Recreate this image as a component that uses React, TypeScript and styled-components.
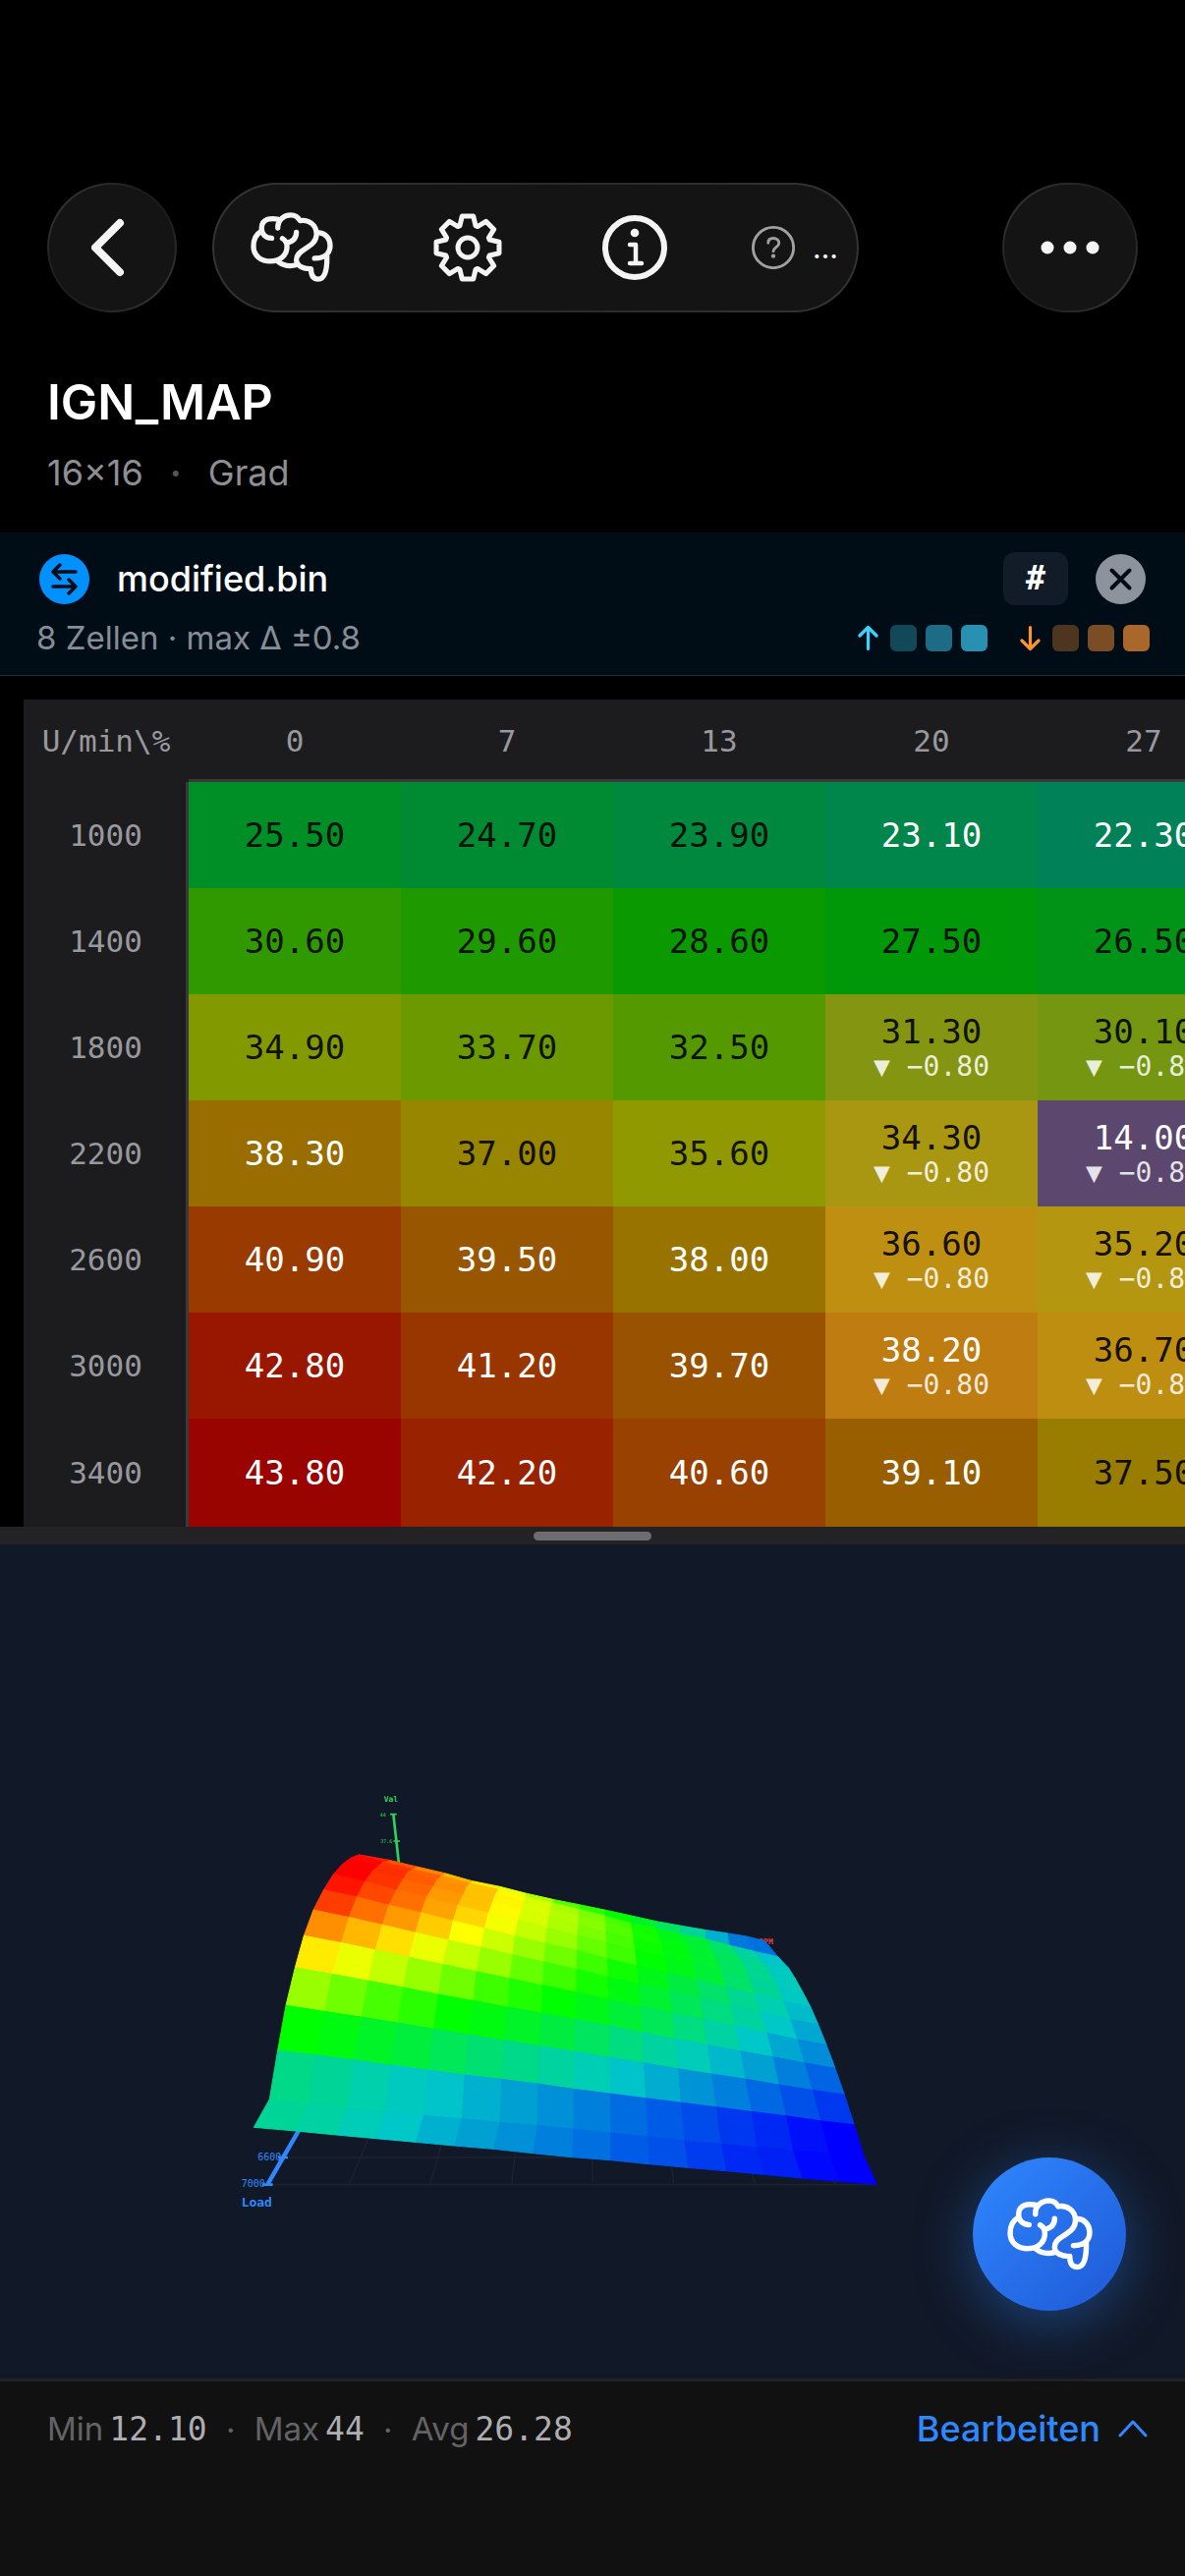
import { FC, ReactNode } from 'react'
import styled, { createGlobalStyle } from 'styled-components'

const sans = `Inter, 'Liberation Sans', sans-serif`
const mono = `'DejaVu Sans Mono', 'Liberation Mono', monospace`

const MIN = 12.1
const MAX = 44

const GlobalStyle = createGlobalStyle`
	* {
		box-sizing: border-box;
	}

	body {
		margin: 0;
		background: #000;
		color: #fff;
		font-family: ${sans};
	}

	button {
		margin: 0;
		padding: 0;
		border: 0;
		background: none;
		color: inherit;
		font: inherit;
		cursor: pointer;
	}

	svg {
		display: block;
	}
`

type RGB = [number, number, number]

const stops: RGB[] = [
	[0, 0, 255],
	[0, 200, 200],
	[0, 255, 0],
	[255, 255, 0],
	[255, 0, 0],
]

const heat = (t: number): RGB => {
	const pos = Math.min(Math.max(t, 0), 1) * 4
	const i = Math.min(Math.floor(pos), 3)
	return stops[i].map((c, k) => c + (stops[i + 1][k] - c) * (pos - i)) as RGB
}

const css = (c: RGB) => `rgb(${c.map(Math.round).join(', ')})`

const cellColor = (value: number, changed: boolean) => {
	const base = heat((value - MIN) / (MAX - MIN)).map((c) => c * 0.6) as RGB
	const tint: RGB = [255, 146, 48]
	return css(changed ? (base.map((c, k) => c + (tint[k] - c) * 0.36) as RGB) : base)
}

const Page = styled.div`
	min-height: 100vh;
	display: flex;
	flex-direction: column;
	overflow: hidden;
`

const Toolbar = styled.nav`
	display: flex;
	align-items: center;
	padding: 186px 48px 0;
`

const GlassButton = styled.button<{ $width: number }>`
	width: ${({ $width }) => $width}px;
	height: 132px;
	display: flex;
	align-items: center;
	justify-content: center;
	flex: none;
	border: 2px solid transparent;
	border-radius: 69px;
	color: #f4f4f4;
	background: linear-gradient(#141414, #141414) padding-box,
		linear-gradient(135deg, #3c3c3c, #1c1c1c 40%, #1c1c1c 60%, #3c3c3c) border-box;
`

const Pill = styled.div`
	height: 132px;
	margin: 0 auto 0 36px;
	padding: 0 19px 0 37px;
	display: flex;
	align-items: center;
	gap: 86px;
	border: 2px solid transparent;
	border-radius: 66px;
	color: #f4f4f4;
	background: linear-gradient(#141414, #141414) padding-box,
		linear-gradient(100deg, #333, #2a2a2a 50%, #333) border-box;
`

const ToolButton = styled.button<{ $width: number }>`
	width: ${({ $width }) => $width}px;
	height: 72px;
	display: flex;
	align-items: center;
	justify-content: center;
`

const HelpButton = styled.button`
	display: flex;
	align-items: center;
	gap: 18px;
	width: 88px;
	font-size: 30px;
	line-height: 36px;
`

const TitleBlock = styled.header`
	padding: 61px 48px 39px;
`

const Title = styled.h1`
	margin: 0 0 20px;
	font-size: 50px;
	line-height: 60px;
	font-weight: 600;
`

const Subtitle = styled.div`
	display: flex;
	gap: 27px;
	font-size: 36px;
	line-height: 44px;
	color: #8e8e93;
`

const Dot = styled.span`
	color: #545458;
	font-weight: 700;
`

const Banner = styled.section`
	padding: 20px 36px 18px;
	display: flex;
	flex-direction: column;
	gap: 13px;
	background: #000d17;
	border-bottom: 1px solid #2a2f34;
`

const BannerRow = styled.div<{ $height: number }>`
	height: ${({ $height }) => $height}px;
	padding: 0 0 0 4px;
	display: flex;
	align-items: center;
`

const FileName = styled.strong`
	flex: 1;
	margin-left: 28px;
	font-size: 36px;
	line-height: 44px;
	font-weight: 500;
`

const DiffSummary = styled.span`
	flex: 1;
	margin-left: -3px;
	font-size: 33px;
	line-height: 40px;
	color: #868d96;
`

const HashButton = styled.button`
	width: 66px;
	height: 54px;
	margin-right: 28px;
	border-radius: 12px;
	background: #111c28;
	font-family: ${mono};
	font-size: 33px;
	line-height: 54px;
	font-weight: 700;
`

const CloseButton = styled.button`
	margin-right: 4px;
`

const Legend = styled.div`
	display: flex;
	align-items: center;
	gap: 9px;
	margin-left: 33px;
`

const Swatch = styled.span<{ $color: string }>`
	width: 27px;
	height: 27px;
	border-radius: 6px;
	background: ${({ $color }) => $color};
`

const TableScroller = styled.div`
	margin: 24px 0 0 24px;
	overflow: hidden;
`

const MapTable = styled.table`
	width: 1248px;
	table-layout: fixed;
	border-collapse: separate;
	border-spacing: 0;
	background: #1c1c1e;
	font-family: ${mono};
	text-align: center;
`

const HeadCell = styled.th<{ $corner?: boolean }>`
	width: ${({ $corner }) => ($corner ? 168 : 216)}px;
	height: 84px;
	padding: 3px 0 0;
	border-bottom: 3px solid ${({ $corner }) => ($corner ? '#1c1c1e' : '#3a3a3c')};
	font-size: 31px;
	line-height: 36px;
	font-weight: 400;
	color: #98989f;
`

const RowHead = styled.th`
	height: 108px;
	padding: 0 0 0 2px;
	border-right: 3px solid #3a3a3c;
	font-size: 31px;
	line-height: 36px;
	font-weight: 400;
	color: #98989f;

	tr:last-child & {
		height: 110px;
	}
`

const Cell = styled.td<{ $value: number; $changed: boolean }>`
	padding: ${({ $changed }) => ($changed ? '4px 0 0' : '0')};
	background: ${({ $value, $changed }) => cellColor($value, $changed)};
	color: ${({ $value }) => ($value < 23.5 || $value > 37.8 ? '#fff' : 'rgba(0, 0, 0, 0.9)')};
	font-size: 34px;
	line-height: 36px;
`

const Delta = styled.div`
	color: rgba(255, 255, 255, 0.85);
	font-size: 28px;
	line-height: 36px;
`

const Divider = styled.div`
	height: 18px;
	display: flex;
	align-items: center;
	justify-content: center;
	background: #232325;
`

const Handle = styled.span`
	width: 120px;
	height: 9px;
	border-radius: 5px;
	background: #6c6c71;
`

const ChartPanel = styled.section`
	position: relative;
	flex: 1;
	min-height: 600px;
	background: #111827;
`

const Fab = styled.button`
	position: absolute;
	right: 60px;
	bottom: 69px;
	width: 156px;
	height: 156px;
	display: flex;
	align-items: center;
	justify-content: center;
	border-radius: 50%;
	background: linear-gradient(135deg, #2f88ff, #1f58d6);
	box-shadow: 0 12px 60px rgba(45, 136, 255, 0.4);
`

const StatusBar = styled.footer`
	height: 201px;
	padding: 26px 38px 0 48px;
	display: flex;
	align-items: flex-start;
	justify-content: space-between;
	border-top: 3px solid #222224;
	background: #111;
`

const Stats = styled.div`
	display: flex;
	align-items: center;
	font-size: 33px;
	line-height: 44px;
	color: #636366;

	b {
		margin-left: 6px;
		font-family: ${mono};
		font-weight: 400;
		color: #aeaeb2;
	}

	i {
		width: 48px;
		text-align: center;
		font-style: normal;
	}
`

const EditButton = styled.button`
	display: flex;
	align-items: center;
	gap: 18px;
	font-size: 36px;
	line-height: 44px;
	font-weight: 500;
	color: #2f88ff;
`

const BrainIcon: FC<{ size: number }> = ({ size }) => (
	<svg
		width={size}
		viewBox="74 77 254 215"
		fill="none"
		stroke="currentColor"
		strokeWidth="16"
		strokeLinecap="round"
		strokeLinejoin="round"
	>
		<path d="M105 137C91 145 83 160 83 182C83 211 106 228 135 228C165 228 186 210 186 183C186 172 181 163 172 158" />
		<path d="M186 171C205 167 215 156 215 139" />
		<path d="M160 99C138 94 109 96 108 125C107 145 121 157 139 157" />
		<path d="M158 126C156 102 176 86 198 86C211 86 220 92 226 103C252 98 277 116 277 144C277 168 259 179 240 191C224 201 215 209 215 224C215 243 238 252 260 251C260 269 265 283 282 283C302 283 310 256 309 212" />
		<path d="M285 140C305 142 319 158 319 180C319 204 302 219 271 219" />
		<path d="M160 230C176 242 198 244 216 239" />
	</svg>
)

const tooth = [
	[-24, -66],
	[-17, -95],
	[17, -95],
	[24, -66],
]

const gearPoints = Array.from({ length: 8 }, (_, i) => {
	const a = (i * Math.PI) / 4
	return tooth.map(([x, y]) => `${x * Math.cos(a) - y * Math.sin(a)},${x * Math.sin(a) + y * Math.cos(a)}`)
})
	.flat()
	.join(' ')

const GearIcon: FC = () => (
	<svg width="70" viewBox="-104 -104 208 208" fill="none" stroke="currentColor" strokeWidth="15" strokeLinejoin="round">
		<polygon points={gearPoints} />
		<circle r="29.500" />
	</svg>
)

const InfoIcon: FC = () => (
	<svg width="66" viewBox="0 0 66 66" fill="none" stroke="currentColor" strokeWidth="6" strokeLinecap="round">
		<circle cx="33" cy="33" r="30" />
		<circle cx="33" cy="18" r="4.300" fill="currentColor" stroke="none" />
		<path d="M28 30h6v18M28 49h12" strokeWidth="4.500" strokeLinejoin="round" />
	</svg>
)

const HelpIcon: FC = () => (
	<svg width="46" viewBox="0 0 46 46" fill="none" stroke="#a0a0a0" strokeWidth="3" strokeLinecap="round">
		<circle cx="23" cy="23" r="21.500" />
		<path d="M17.500 18C17.500 14.500 20 13 23 13C26.500 13 29 15 29 18.200C29 22.500 23 22.800 23 27" />
		<circle cx="23" cy="32" r="2.200" fill="#a0a0a0" stroke="none" />
	</svg>
)

const ArrowIcon: FC<{ color: string; down?: boolean }> = ({ color, down }) => (
	<svg width="24" height="27" viewBox="0 0 24 27" fill="none" stroke={color} strokeWidth="3.200" strokeLinecap="round" strokeLinejoin="round">
		<path d={down ? 'M10.500 2.500V24.500M2 16L10.500 24.500L19 16' : 'M10.500 24.500V2.500M2 11L10.500 2.500L19 11'} />
	</svg>
)

const columns = ['0', '7', '13', '20', '27']

type MapRow = { rpm: string; values: string[]; changed?: number[] }

const rows: MapRow[] = [
	{ rpm: '1000', values: ['25.50', '24.70', '23.90', '23.10', '22.30'] },
	{ rpm: '1400', values: ['30.60', '29.60', '28.60', '27.50', '26.50'] },
	{ rpm: '1800', values: ['34.90', '33.70', '32.50', '31.30', '30.10'], changed: [3, 4] },
	{ rpm: '2200', values: ['38.30', '37.00', '35.60', '34.30', '14.00'], changed: [3, 4] },
	{ rpm: '2600', values: ['40.90', '39.50', '38.00', '36.60', '35.20'], changed: [3, 4] },
	{ rpm: '3000', values: ['42.80', '41.20', '39.70', '38.20', '36.70'], changed: [3, 4] },
	{ rpm: '3400', values: ['43.80', '42.20', '40.60', '39.10', '37.50'] },
]

// mesh lines of the surface, front to back, 17 projected points each
const mesh = [
	'115,1096 243,1107 365,1119 487,1130 607,1141 726,1152 846,1162 966,1175 1086,1187 1203,1196 1321,1208 1439,1219 1556,1229 1672,1240 1788,1251 1903,1261 2017,1270',
	'163,1010 280,1024 398,1037 515,1048 632,1060 748,1070 864,1081 978,1091 1089,1101 1203,1113 1317,1125 1428,1137 1540,1147 1650,1158 1760,1167 1870,1176 1977,1183',
	'188,861 302,875 417,890 532,906 646,921 757,936 870,949 981,963 1090,979 1202,993 1310,1007 1417,1020 1525,1034 1633,1048 1739,1061 1844,1076 1948,1088',
	'213,724 329,742 442,759 553,777 662,795 769,813 877,830 985,847 1092,864 1200,882 1304,899 1409,917 1511,933 1614,948 1717,966 1819,982 1918,996',
	'241,608 352,628 462,648 569,668 676,690 782,709 888,729 991,747 1095,766 1199,785 1301,807 1400,826 1499,844 1599,863 1699,881 1795,899 1890,916',
	'268,511 379,532 483,554 587,576 690,598 793,620 894,641 995,662 1097,683 1196,705 1294,725 1391,747 1487,766 1584,786 1680,807 1773,828 1863,844',
	'297,432 403,454 505,477 606,501 707,524 807,546 904,569 999,591 1098,613 1194,636 1288,659 1383,679 1476,700 1570,723 1660,744 1752,766 1838,782',
	'328,371 427,392 525,417 623,440 721,465 817,488 910,512 1003,534 1100,555 1192,581 1283,602 1375,623 1465,646 1555,667 1643,689 1730,711 1815,729',
	'358,323 452,345 548,371 640,393 735,418 829,441 920,463 1008,487 1101,510 1191,533 1277,554 1367,576 1454,597 1541,620 1626,640 1710,662 1790,682',
	'385,293 475,313 567,339 660,361 752,386 841,409 930,431 1014,452 1103,477 1188,500 1272,520 1359,540 1445,562 1525,582 1610,604 1690,625 1768,642',
	'410,274 493,297 583,315 672,340 762,362 850,385 935,407 1018,427 1105,450 1187,470 1268,492 1350,513 1432,532 1510,552 1590,572 1668,592 1748,610',
	'435,264 507,285 597,308 686,328 772,350 860,370 942,392 1026,411 1106,430 1185,450 1264,472 1340,488 1413,505 1493,520 1566,540 1640,558 1715,575',
	'450,266 528,280 612,300 698,320 782,344 866,361 944,381 1028,400 1108,416 1186,432 1268,450 1344,467 1416,480 1492,493 1560,503 1620,513 1675,527',
].map((line) => line.split(' ').map((p) => p.split(',').map(Number)))

// percent of the value range for every facet, same order as the mesh
const facets = [
	[31, 29.5, 27, 25, 22, 20, 18, 16, 14, 11.5, 10, 7.5, 5, 4, 1, 0],
	[33, 31, 28.5, 26, 24.5, 22, 20, 18, 16, 13.5, 11.5, 9.5, 7, 5, 2, 0],
	[50, 48, 45, 42.5, 39, 36, 33, 30, 27.5, 24.5, 21.5, 18.5, 16, 13, 10, 7],
	[65, 61, 57, 54, 50, 48, 45, 42, 38, 34, 30, 27, 23, 20, 16, 12.5],
	[77, 73, 69, 65, 61, 56, 53, 50, 47, 43, 39, 34, 29.5, 25, 21, 17.5],
	[86, 82, 78, 73, 69, 65, 60, 56, 52, 48, 44, 39, 34, 30, 25, 21],
	[94, 89, 85, 80, 75, 70, 65, 61, 56, 51.5, 47, 42, 37, 32, 28, 23.5],
	[98, 93, 89, 84, 79, 74, 69, 65, 60, 56, 50, 47, 43, 37, 31, 25.5],
	[100, 95, 90, 85, 81, 75.5, 71, 67, 62, 57, 51, 48, 44, 38, 32, 26.5],
	[100, 95.5, 91, 86, 81, 76, 71.5, 67.5, 63, 58, 52, 48, 44, 38.5, 32, 26],
	[99.5, 95, 90.5, 85.5, 81, 75.5, 71, 66.5, 62, 57, 51.5, 47, 43, 37, 30, 24.5],
	[97, 92, 87, 82, 77, 73, 67, 58, 54, 50, 45, 38, 31, 22, 15, 14],
]

const quads = facets
	.flatMap((row, r) =>
		row.map((t, c) => ({
			points: [mesh[r][c], mesh[r][c + 1], mesh[r + 1][c + 1], mesh[r + 1][c]].map((p) => p.join(',')).join(' '),
			color: css(heat(t / 100)),
		})),
	)
	.reverse()

const SurfaceChart: FC = () => (
	<svg width="100%" height="100%" viewBox="0 0 1206 849" role="img" aria-label="IGN_MAP 3D">
		<g transform="translate(220 228) scale(0.33333)" fontFamily={mono}>
			<path
				d="M200 1188H1300M155 1271H2017M465 1130L405 1271M687 1152L653 1271M914 1170L902 1271M1149 1190V1271M1390 1210L1397 1271M1636 1235L1645 1271M1885 1258L1893 1271"
				stroke="#1e242f"
				strokeWidth="4"
				fill="none"
			/>
			<g stroke="#30d158" strokeWidth="8">
				<path d="M541 140L558 292" />
				<path d="M531 140H551M541 222H561" strokeWidth="5" />
			</g>
			<g fill="#30d158">
				<text x="512" y="102" fontSize="24" fontWeight="700">Val</text>
				<text x="500" y="146" fontSize="15">44</text>
				<text x="502" y="228" fontSize="15">37.6</text>
			</g>
			<text x="1657" y="536" fontSize="24" fontWeight="700" fill="#e8402f">RPM</text>
			<g stroke="#2f88ff" strokeWidth="13">
				<path d="M157 1270L252 1106" />
				<path d="M140 1271H173M189 1188H219" strokeWidth="8" />
			</g>
			<g fill="#2f88ff">
				<text x="127" y="1197" fontSize="30">6600</text>
				<text x="77" y="1279" fontSize="30">7000</text>
				<text x="77" y="1338" fontSize="39" fontWeight="700">Load</text>
			</g>
			{quads.map(({ points, color }) => (
				<polygon key={points} points={points} fill={color} stroke={color} strokeWidth="3" strokeLinejoin="round" />
			))}
		</g>
	</svg>
)

const StatItem: FC<{ label: string; children: ReactNode }> = ({ label, children }) => (
	<span>
		{label}
		<b>{children}</b>
	</span>
)

const App: FC = () => (
	<Page>
		<GlobalStyle />
		<Toolbar>
			<GlassButton $width={132} aria-label="Zurück">
				<svg width="42" height="66" viewBox="0 0 42 66" fill="none" stroke="currentColor" strokeWidth="8" strokeLinecap="round" strokeLinejoin="round">
					<path d="M29 8L4 33L29 58" />
				</svg>
			</GlassButton>
			<Pill>
				<ToolButton $width={84} aria-label="KI">
					<BrainIcon size={84} />
				</ToolButton>
				<ToolButton $width={102} aria-label="Einstellungen">
					<GearIcon />
				</ToolButton>
				<ToolButton $width={66} aria-label="Info">
					<InfoIcon />
				</ToolButton>
				<HelpButton aria-label="Hilfe">
					<HelpIcon />
					<span>…</span>
				</HelpButton>
			</Pill>
			<GlassButton $width={138} aria-label="Mehr">
				<svg width="60" height="14" viewBox="0 0 60 14" fill="currentColor">
					<circle cx="7" cy="7" r="6.500" />
					<circle cx="30" cy="7" r="6.500" />
					<circle cx="53" cy="7" r="6.500" />
				</svg>
			</GlassButton>
		</Toolbar>
		<TitleBlock>
			<Title>IGN_MAP</Title>
			<Subtitle>
				<span>16×16</span>
				<Dot>·</Dot>
				<span>Grad</span>
			</Subtitle>
		</TitleBlock>
		<Banner>
			<BannerRow $height={54}>
				<svg width="51" height="51" viewBox="0 0 51 51" fill="none" stroke="#000d17" strokeWidth="3.500" strokeLinecap="round" strokeLinejoin="round">
					<circle cx="25.500" cy="25.500" r="25.500" fill="#0091ff" stroke="none" />
					<path d="M37 18H14M21 11L14 18L21 25M14 33H37M30 26L37 33L30 40" />
				</svg>
				<FileName>modified.bin</FileName>
				<HashButton>#</HashButton>
				<CloseButton aria-label="Schließen">
					<svg width="51" height="51" viewBox="0 0 51 51" fill="none" stroke="#000d17" strokeWidth="4" strokeLinecap="round">
						<circle cx="25.500" cy="25.500" r="25.500" fill="#8c939c" stroke="none" />
						<path d="M16.500 16.500L34.500 34.500M34.500 16.500L16.500 34.500" />
					</svg>
				</CloseButton>
			</BannerRow>
			<BannerRow $height={40}>
				<DiffSummary>8 Zellen · max Δ ±0.8</DiffSummary>
				<Legend>
					<ArrowIcon color="#3cd3fe" />
					<Swatch $color="#134859" />
					<Swatch $color="#1d6b84" />
					<Swatch $color="#2891b1" />
				</Legend>
				<Legend>
					<ArrowIcon color="#ff9230" down />
					<Swatch $color="#4d3520" />
					<Swatch $color="#7a4d25" />
					<Swatch $color="#a9672b" />
				</Legend>
			</BannerRow>
		</Banner>
		<TableScroller>
			<MapTable>
				<thead>
					<tr>
						<HeadCell $corner scope="col">{'U/min\\%'}</HeadCell>
						{columns.map((load) => (
							<HeadCell key={load} scope="col">{load}</HeadCell>
						))}
					</tr>
				</thead>
				<tbody>
					{rows.map(({ rpm, values, changed = [] }) => (
						<tr key={rpm}>
							<RowHead scope="row">{rpm}</RowHead>
							{values.map((value, i) => (
								<Cell key={value} $value={Number(value)} $changed={changed.includes(i)}>
									{value}
									{changed.includes(i) && <Delta>▼ −0.80</Delta>}
								</Cell>
							))}
						</tr>
					))}
				</tbody>
			</MapTable>
		</TableScroller>
		<Divider>
			<Handle />
		</Divider>
		<ChartPanel>
			<SurfaceChart />
			<Fab aria-label="KI-Assistent">
				<BrainIcon size={87} />
			</Fab>
		</ChartPanel>
		<StatusBar>
			<Stats>
				<StatItem label="Min">12.10</StatItem>
				<i>·</i>
				<StatItem label="Max">44</StatItem>
				<i>·</i>
				<StatItem label="Avg">26.28</StatItem>
			</Stats>
			<EditButton>
				Bearbeiten
				<svg width="30" height="18" viewBox="0 0 30 18" fill="none" stroke="currentColor" strokeWidth="3" strokeLinecap="round" strokeLinejoin="round">
					<path d="M2 16L15 2L28 16" />
				</svg>
			</EditButton>
		</StatusBar>
	</Page>
)

export default App
